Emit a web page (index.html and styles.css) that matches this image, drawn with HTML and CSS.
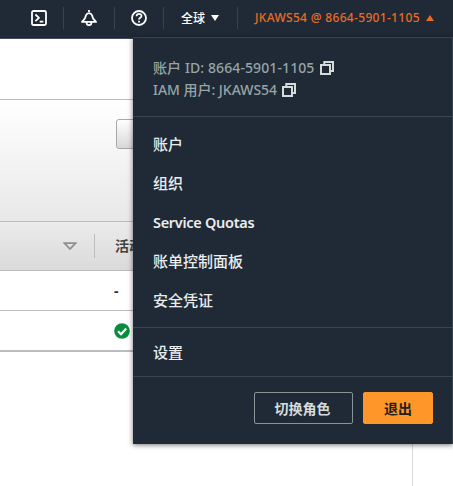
FILE: index.html
```html
<!DOCTYPE html>
<html lang="zh-CN">
<head>
<meta charset="utf-8">
<title>AWS</title>
<link rel="stylesheet" href="styles.css">
</head>
<body>
<header class="topbar">
  <div class="tool tool-shell">
    <svg class="icon" viewBox="0 0 16 16"><rect x="1" y="1" width="14" height="14" rx="1.5"/><path d="M4.4 4.5 8 7.8l-3.6 3.3M8.7 11.6h3.6"/></svg>
  </div>
  <div class="tool tool-bell">
    <svg class="icon" viewBox="0 0 16 16"><path d="M8 0v2M1 11.9h14l-2.8-3.2L11 5.2a3.2 3.2 0 0 0-6 0L3.8 8.7zM5.6 12v1a2.4 2.2 0 0 0 4.8 0v-1"/></svg>
  </div>
  <div class="tool tool-help">
    <svg class="icon" viewBox="0 0 16 16"><circle cx="8" cy="8" r="7"/><path d="M5.6 6.2C5.6 3 10.6 3.2 10.5 6 10.4 7.7 8 7.7 8 9.5M8 10.8v1.8"/></svg>
  </div>
  <div class="tool region">全球<span class="caret-down"></span></div>
  <div class="user"><span class="user-name">JKAWS54 @ 8664-5901-1105</span><span class="caret-up"></span></div>
</header>
<main class="page">
  <section class="toolbar"><span class="action"></span></section>
  <div class="table-head">
    <svg class="sort" viewBox="0 0 14 9"><path d="M1.5 1.2h11L7 7z"/></svg>
    <span class="column">活动</span>
  </div>
  <div class="row">-</div>
  <div class="row row-last">
    <svg class="check" viewBox="0 0 16 16"><circle cx="8" cy="8" r="7.8"/><path d="m4 8.3 3 2.9 5.2-5.6"/></svg>
  </div>
  <div class="below"></div>
</main>
<nav class="menu">
  <div class="identity">
    <div class="id-line"><span class="id-account">账户 ID: 8664-5901-1105</span><svg class="copy" viewBox="0 0 14 14"><path d="M1 4h9v9H1zM4.3 3.5V1H13v9h-2.5"/></svg></div>
    <div class="id-line"><span class="id-user">IAM 用户: JKAWS54</span><svg class="copy" viewBox="0 0 14 14"><path d="M1 4h9v9H1zM4.3 3.5V1H13v9h-2.5"/></svg></div>
  </div>
  <div class="links">
    <a>账户</a>
    <a>组织</a>
    <a><span class="quotas">Service Quotas</span></a>
    <a>账单控制面板</a>
    <a>安全凭证</a>
  </div>
  <div class="settings"><a>设置</a></div>
  <div class="buttons">
    <button class="btn switch">切换角色</button>
    <button class="btn signout">退出</button>
  </div>
</nav>
</body>
</html>
```
FILE: styles.css
```css
* { box-sizing: border-box; }

body {
  margin: 0;
  height: 486px;
  overflow: hidden;
  position: relative;
  background: #fff;
  font-family: "Noto Sans", "Noto Sans CJK SC", sans-serif;
}

.topbar {
  display: flex;
  align-items: center;
  height: 39px;
  padding-bottom: 3px;
  background: #202a36;
  border-bottom: 1px solid #424b59;
  color: #fff;
}

.tool {
  display: flex;
  align-items: center;
  height: 22px;
  border-right: 1px solid #36424e;
}
.tool-shell { width: 64px; padding-left: 31px; }
.tool-bell { width: 51px; padding-left: 17px; }
.tool-help { width: 49px; padding-left: 16px; }
.region {
  width: 74px;
  padding-left: 17px;
  font-size: 12px;
  font-weight: 500;
}
.icon {
  width: 16px;
  height: 16px;
  fill: none;
  stroke: #fff;
  stroke-width: 1.8;
  stroke-linejoin: round;
}
.caret-down, .caret-up {
  border-left: 4px solid transparent;
  border-right: 4px solid transparent;
}
.caret-down { margin-left: 6px; border-top: 6px solid #fff; }
.caret-up { margin-left: 6px; border-bottom: 6px solid #ec6a22; }
.user {
  display: flex;
  align-items: center;
  padding-left: 17px;
  color: #ec6a22;
  font-size: 12px;
  font-weight: 500;
  white-space: nowrap;
}
.user-name { width: 165px; letter-spacing: .32px; }

.toolbar {
  height: 122px;
  margin-top: 60px;
  padding: 19px 0 0 116px;
  border-top: 1px solid #bcbcbc;
  background: linear-gradient(#fff, #e8e8e8);
}
.action {
  display: block;
  width: 90px;
  height: 30px;
  border: 1px solid #a8a8a8;
  border-radius: 3px;
  background: linear-gradient(#fff, #d8d8d8);
}
.table-head {
  display: flex;
  align-items: center;
  height: 50px;
  border: solid #bcbcbc;
  border-width: 1px 0;
  background: linear-gradient(#ebebeb, #dadada);
}
.sort {
  width: 14px;
  height: 9px;
  margin: 0 17px 0 63px;
  fill: none;
  stroke: #909090;
  stroke-width: 1.8;
}
.column {
  height: 24px;
  padding-left: 20px;
  border-left: 1px solid #bcbcbc;
  color: #444;
  font-size: 14px;
  font-weight: 700;
  line-height: 23px;
}
.row {
  display: flex;
  align-items: center;
  height: 40px;
  padding-left: 114px;
  border-bottom: 1px solid #bcbcbc;
  color: #333;
  font-size: 14px;
  font-weight: 700;
}
.row-last { height: 41px; padding-top: 1px; border-bottom-width: 2px; }
.check { width: 16px; height: 16px; fill: #078d3e; }
.check path { fill: none; stroke: #fff; stroke-width: 2.2; }
.below { width: 413px; height: 140px; border-right: 1px solid #d5dbdb; }

.menu {
  position: absolute;
  top: 37px;
  left: 133px;
  width: 320px;
  height: 407px;
  background: #202a36;
  border-top: 1px solid #36424e;
  border-right: 1px solid #36424e;
  box-shadow: 0 1px 5px rgba(0, 0, 0, .55);
  color: #eaeded;
}
.identity {
  height: 79px;
  padding: 19px 0 0 20px;
  border-bottom: 1px solid #3b4550;
  color: #95a5a6;
  font-size: 14px;
  font-weight: 500;
}
.id-line {
  display: flex;
  align-items: center;
  height: 22px;
  line-height: 22px;
  white-space: nowrap;
}
.id-account { width: 167px; letter-spacing: .1px; }
.id-user { width: 129px; letter-spacing: -.03px; }
.copy { width: 14px; height: 14px; fill: none; stroke: #d5dbdb; stroke-width: 2; }
.links {
  height: 211px;
  padding: 8px 20px 0;
  border-bottom: 1px solid #3b4550;
}
.menu a {
  display: block;
  height: 39px;
  font-size: 15px;
  font-weight: 500;
  line-height: 39px;
}
.quotas { font-size: 14.5px; font-weight: 600; letter-spacing: -.3px; }
.settings {
  height: 49px;
  padding: 5px 20px 0;
  border-bottom: 1px solid #3b4550;
}
.buttons {
  display: flex;
  justify-content: flex-end;
  gap: 10px;
  padding: 15px 19px 0 0;
}
.btn {
  height: 32px;
  padding: 0;
  border: 1px solid #879596;
  border-radius: 2px;
  background: transparent;
  color: #d5dbdb;
  font: 700 14px "Noto Sans", "Noto Sans CJK SC", sans-serif;
}
.switch { width: 99px; padding-right: 2px; }
.signout { width: 70px; border-color: #ff9629; background: #ff9629; color: #202020; }
```
